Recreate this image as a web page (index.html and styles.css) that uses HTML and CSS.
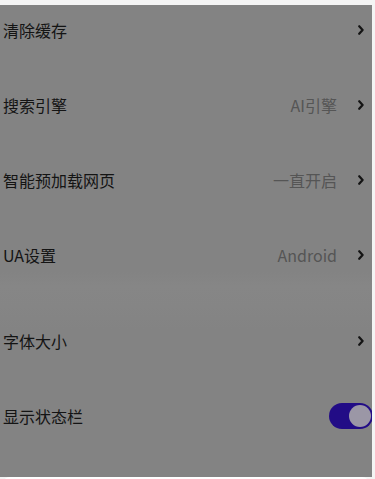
FILE: index.html
```html
<!DOCTYPE html>
<html lang="zh">
<head>
<meta charset="utf-8">
<link rel="stylesheet" href="styles.css">
</head>
<body>
<div class="screen">
  <div class="list">
    <div class="section">
      <div class="row"><span class="label">清除缓存</span><span class="right"><svg class="chev" viewBox="0 0 6 10"><path d="M1.2 1.2 L4.6 5 L1.2 8.8"/></svg></span></div>
      <div class="row"><span class="label">搜索引擎</span><span class="right"><span class="value">AI引擎</span><svg class="chev" viewBox="0 0 6 10"><path d="M1.2 1.2 L4.6 5 L1.2 8.8"/></svg></span></div>
      <div class="row"><span class="label">智能预加载网页</span><span class="right"><span class="value">一直开启</span><svg class="chev" viewBox="0 0 6 10"><path d="M1.2 1.2 L4.6 5 L1.2 8.8"/></svg></span></div>
      <div class="row"><span class="label">UA设置</span><span class="right"><span class="value">Android</span><svg class="chev" viewBox="0 0 6 10"><path d="M1.2 1.2 L4.6 5 L1.2 8.8"/></svg></span></div>
    </div>
    <div class="band"></div>
    <div class="section">
      <div class="row"><span class="label">字体大小</span><span class="right"><svg class="chev" viewBox="0 0 6 10"><path d="M1.2 1.2 L4.6 5 L1.2 8.8"/></svg></span></div>
      <div class="row"><span class="label">显示状态栏</span><span class="toggle"><span class="knob"></span></span></div>
    </div>
  </div>
  <div class="sheet"></div>
</div>
</body>
</html>
```
FILE: styles.css
```css
html, body {
  margin: 0;
  padding: 0;
  background: #f4f4f4;
}
body {
  font-family: "Noto Sans CJK SC", "Noto Sans", sans-serif;
  width: 375px;
  height: 479px;
  overflow: hidden;
}
.screen {
  padding-top: 5px;
  display: flex;
  flex-direction: column;
}
.list {
  width: 372px;
  height: 472px;
  background: #838383;
  box-sizing: border-box;
  padding-top: 13px;
  overflow: hidden;
  display: flex;
  flex-direction: column;
}
.section {
  display: flex;
  flex-direction: column;
  gap: 51px;
}
.band {
  height: 57px;
  margin-top: 5px;
  background: linear-gradient(#838383 0, #868686 25%, #858585 60%, #838383 100%);
}
.row {
  height: 24px;
  display: flex;
  align-items: center;
  justify-content: space-between;
  padding-left: 3px;
  padding-right: 8px;
}
.label {
  font-size: 16px;
  color: #141414;
  line-height: 24px;
}
.right {
  display: flex;
  align-items: center;
  gap: 21px;
}
.value {
  font-size: 16px;
  color: #555555;
  line-height: 24px;
}
.chev {
  width: 6px;
  height: 10px;
  fill: none;
  stroke: #141414;
  stroke-width: 2.2;
  stroke-linecap: round;
  stroke-linejoin: round;
}
.toggle {
  width: 44px;
  height: 26px;
  border-radius: 13px;
  background: #220c86;
  display: flex;
  align-items: center;
  justify-content: flex-end;
  padding: 0 2px;
  box-sizing: border-box;
  margin-right: -9px;
}
.knob {
  width: 22px;
  height: 22px;
  border-radius: 50%;
  background: #9b97a6;
}
.sheet {
  margin: 0 5px 0 2px;
  height: 10px;
  background: #ffffff;
  border-radius: 8px 8px 0 0;
}
```
